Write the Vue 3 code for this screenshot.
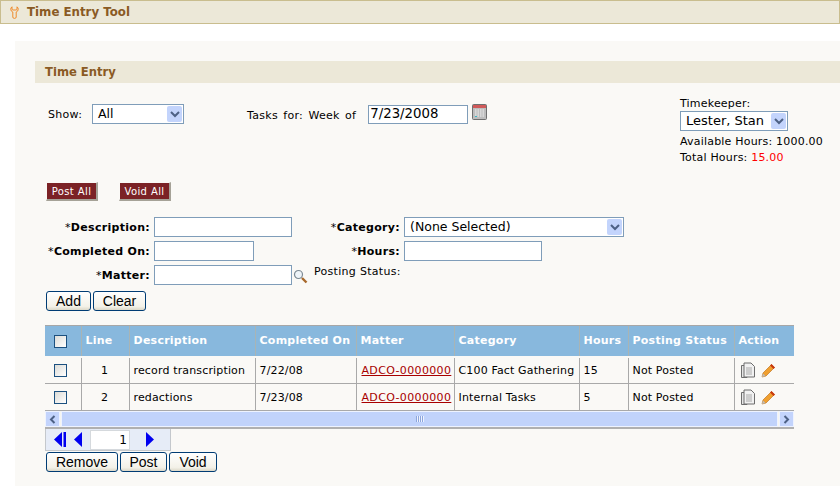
<template>
	<div class="page">
		<div class="tool-bar">
			<svg class="tool-bar__icon" width="9" height="13" viewBox="0 0 9 13" fill="none" stroke="#ef8a2c" stroke-width="1">
				<path d="M2 0.8 V3 Q2 4 3 4 H6 Q7 4 7 3 V0.8 Q8.5 1.8 8.2 3.6 Q8 5.4 6.2 6 V11 Q6.2 12.4 4.5 12.4 Q2.8 12.4 2.8 11 V6 Q1 5.4 0.8 3.6 Q0.5 1.8 2 0.8 Z" />
			</svg>
			<span>Time Entry Tool</span>
		</div>

		<div class="panel">
			<div class="section-title">Time Entry</div>

			<div class="top-row">
				<div class="show">
					<span class="show__label">Show:</span>
					<div class="select select--show">
						<span>All</span>
						<span class="select__arrow"><svg width="10" height="7" viewBox="0 0 10 7"><path d="M1 1 L5 5 L9 1" fill="none" stroke="#4d6185" stroke-width="2" /></svg></span>
					</div>
				</div>
				<div class="week">
					<span class="week__label">Tasks for: Week of</span>
					<div class="input input--date">7/23/2008</div>
					<svg class="week__cal" width="16" height="17" viewBox="0 0 16 17">
						<rect x="0.5" y="0.5" width="14" height="15" rx="1" fill="#bdbdbd" stroke="#6f6f6f" />
						<rect x="1" y="1" width="13" height="3" fill="#d05a5a" />
						<path d="M3 6h9M3 8h9M3 10h9M3 12h9" stroke="#f2f2f2" stroke-dasharray="1.5 1" />
						<rect x="3" y="12" width="2" height="1" fill="#39b6c4" />
					</svg>
				</div>
				<div class="keeper">
					<div class="keeper__title">Timekeeper:</div>
					<div class="select select--keeper">
						<span>Lester, Stan</span>
						<span class="select__arrow"><svg width="10" height="7" viewBox="0 0 10 7"><path d="M1 1 L5 5 L9 1" fill="none" stroke="#4d6185" stroke-width="2" /></svg></span>
					</div>
					<div class="keeper__line keeper__line--first">Available Hours: 1000.00</div>
					<div class="keeper__line">Total Hours: <span class="red">15.00</span></div>
				</div>
			</div>

			<div class="bulk">
				<button class="bulk__btn">Post All</button>
				<button class="bulk__btn">Void All</button>
			</div>

			<div class="form">
				<div class="form__col">
					<div class="field">
						<label class="field__label field__label--left">*<b>Description:</b></label>
						<div class="input input--desc"></div>
					</div>
					<div class="field">
						<label class="field__label field__label--left">*<b>Completed On:</b></label>
						<div class="input input--done"></div>
					</div>
					<div class="field">
						<label class="field__label field__label--left">*<b>Matter:</b></label>
						<div class="input input--desc"></div>
						<svg class="field__search" width="15" height="15" viewBox="0 0 15 15">
							<circle cx="5.5" cy="5.5" r="4" fill="#eef4f8" stroke="#7d8a94" stroke-width="1.2" />
							<path d="M9 9 L13.5 13.5" stroke="#a8692c" stroke-width="2.4" />
						</svg>
					</div>
				</div>
				<div class="form__col">
					<div class="field">
						<label class="field__label field__label--right">*<b>Category:</b></label>
						<div class="select select--category">
							<span>(None Selected)</span>
							<span class="select__arrow"><svg width="10" height="7" viewBox="0 0 10 7"><path d="M1 1 L5 5 L9 1" fill="none" stroke="#4d6185" stroke-width="2" /></svg></span>
						</div>
					</div>
					<div class="field">
						<label class="field__label field__label--right">*<b>Hours:</b></label>
						<div class="input input--desc"></div>
					</div>
					<div class="field field--status">Posting Status:</div>
				</div>
			</div>

			<div class="actions">
				<button class="btn btn--add">Add</button>
				<button class="btn btn--clear">Clear</button>
			</div>

			<div class="grid">
				<table class="grid__table">
					<colgroup>
						<col v-for="w in widths" :key="w.name" :style="{ width: w.size + 'px' }" />
					</colgroup>
					<thead>
						<tr>
							<th class="center center--check"><span class="check"></span></th>
							<th>Line</th>
							<th>Description</th>
							<th>Completed On</th>
							<th>Matter</th>
							<th>Category</th>
							<th>Hours</th>
							<th>Posting Status</th>
							<th>Action</th>
						</tr>
					</thead>
					<tbody>
						<tr v-for="row in rows" :key="row.line">
							<td class="center center--check"><span class="check"></span></td>
							<td class="center">{{ row.line }}</td>
							<td>{{ row.description }}</td>
							<td>{{ row.completed }}</td>
							<td><a class="matter">{{ row.matter }}</a></td>
							<td>{{ row.category }}</td>
							<td>{{ row.hours }}</td>
							<td>{{ row.status }}</td>
							<td>
								<div class="row-icons">
									<svg width="16" height="17" viewBox="0 0 16 17">
										<path d="M1.5 3.5 H7 V15.5 H1.5 Z" fill="#e6e6e6" stroke="#6d6d6d" />
										<path d="M4 1 H11 L14.5 4.5 V15 H4 Z" fill="#f1f1f1" stroke="#6d6d6d" />
										<path d="M6 6h6M6 8h6M6 10h6M6 12h6" stroke="#a9a9a9" />
									</svg>
									<svg width="15" height="15" viewBox="0 0 15 15">
										<path d="M1 14 L2 10 L10.5 1.5 L13.5 4.5 L5 13 Z" fill="#f0a030" stroke="#b86a10" stroke-width="0.6" />
										<path d="M1 14 L2 10.5 L4.5 13 Z" fill="#bdbdbd" />
										<path d="M10.5 1 L14 4.5 L12.5 6 L9 2.5 Z" fill="#c8390f" />
									</svg>
								</div>
							</td>
						</tr>
					</tbody>
				</table>
				<div class="scroll">
					<span class="scroll__btn"><svg width="7" height="9" viewBox="0 0 7 9"><path d="M5.5 1 L2 4.5 L5.5 8" fill="none" stroke="#4d6185" stroke-width="2" /></svg></span>
					<div class="scroll__track"><span class="scroll__grip"></span></div>
					<span class="scroll__btn"><svg width="7" height="9" viewBox="0 0 7 9"><path d="M1.5 1 L5 4.5 L1.5 8" fill="none" stroke="#4d6185" stroke-width="2" /></svg></span>
				</div>
			</div>

			<div class="pager">
				<svg width="13" height="15" viewBox="0 0 13 15"><path d="M8 0 V15 L0 7.5 Z M9.5 0 H12 V15 H9.5 Z" fill="#0000f0" /></svg>
				<svg class="pager__prev" width="8" height="15" viewBox="0 0 8 15"><path d="M8 0 V15 L0 7.5 Z" fill="#0000f0" /></svg>
				<div class="pager__input">1</div>
				<svg class="pager__next" width="8" height="15" viewBox="0 0 8 15"><path d="M0 0 V15 L8 7.5 Z" fill="#0000f0" /></svg>
			</div>

			<div class="actions actions--bottom">
				<button class="btn btn--remove">Remove</button>
				<button class="btn btn--post">Post</button>
				<button class="btn btn--void">Void</button>
			</div>
		</div>
	</div>
</template>

<script setup>
const widths = [
	{ name: "check", size: 36 },
	{ name: "line", size: 48 },
	{ name: "description", size: 126 },
	{ name: "completed", size: 101 },
	{ name: "matter", size: 98 },
	{ name: "category", size: 125 },
	{ name: "hours", size: 49 },
	{ name: "status", size: 106 },
	{ name: "action", size: 60 },
];

const rows = [
	{
		line: 1,
		description: "record transcription",
		completed: "7/22/08",
		matter: "ADCO-0000000",
		category: "C100 Fact Gathering",
		hours: 15,
		status: "Not Posted",
	},
	{
		line: 2,
		description: "redactions",
		completed: "7/23/08",
		matter: "ADCO-0000000",
		category: "Internal Tasks",
		hours: 5,
		status: "Not Posted",
	},
];
</script>

<style>
html,
body {
	margin: 0;
	background: #ffffff;
}
</style>

<style scoped>
.page {
	width: 840px;
	height: 486px;
	overflow: hidden;
	font-family: "DejaVu Sans", Verdana, sans-serif;
	font-size: 11px;
	color: #000;
	background: #fff;
}

.tool-bar {
	box-sizing: border-box;
	height: 24px;
	display: flex;
	align-items: center;
	gap: 8px;
	padding-left: 9px;
	background: #ece8d8;
	border: 1px solid #c9bd8e;
	font-size: 11.8px;
	font-weight: bold;
	color: #8a5a24;
}

.panel {
	box-sizing: border-box;
	margin: 17px 0 0 15px;
	height: 445px;
	padding: 20px 0 0 20px;
	background: #faf9f6;
}

.section-title {
	box-sizing: border-box;
	height: 22px;
	padding-left: 10px;
	line-height: 22px;
	background: #ece8d8;
	font-size: 11.6px;
	font-weight: bold;
	color: #8a5a24;
}

.top-row {
	display: flex;
	height: 99px;
	padding: 21px 0 0 13px;
	box-sizing: border-box;
}

.show {
	display: flex;
	align-items: flex-start;
	width: 199px;
	line-height: 22px;
}

.show__label {
	width: 44px;
	letter-spacing: 0.3px;
}

.week {
	display: flex;
	align-items: flex-start;
	line-height: 24px;
	width: 433px;
}

.week__label {
	letter-spacing: 0.3px;
	word-spacing: 1.5px;
}

.week__cal {
	margin-left: 4px;
}

.keeper {
	margin-top: -7px;
	letter-spacing: 0.2px;
}

.keeper__title {
	line-height: 14px;
}

.keeper__line {
	height: 16px;
	line-height: 16px;
}

.keeper__line--first {
	margin-top: 3px;
}

.red {
	color: #f00;
}

.select,
.input {
	box-sizing: border-box;
	height: 20px;
	background: #fff;
	border: 1px solid #7f9db9;
	font-size: 12.5px;
	line-height: 18px;
	letter-spacing: 0;
}

.select {
	display: flex;
	align-items: center;
	justify-content: space-between;
	padding: 0 1px 0 5px;
}

.select__arrow {
	width: 15px;
	height: 16px;
	display: flex;
	align-items: center;
	justify-content: center;
	background: #c3d4fc;
	border-radius: 2px;
}

.select--show {
	width: 92px;
}

.select--keeper {
	width: 108px;
	font-size: 13px;
}

.select--category {
	width: 220px;
}

.input--date {
	width: 100px;
	height: 19px;
	margin: 1px 0 0 12px;
	padding-left: 1px;
	font-size: 13.3px;
	line-height: 16px;
}

.input--desc {
	width: 138px;
}

.input--done {
	width: 100px;
}

.bulk {
	display: flex;
	gap: 21px;
	padding-left: 11px;
}

.bulk__btn {
	box-sizing: border-box;
	width: 52px;
	height: 19px;
	padding: 0;
	border: 1px solid #faf9f6;
	border-right: 2px solid #a5a297;
	border-bottom: 2px solid #a5a297;
	background: #7b2226;
	color: #fff;
	font-family: inherit;
	font-size: 10px;
	letter-spacing: 0.4px;
}

.form {
	display: flex;
	margin-top: 16px;
}

.form__col {
	display: flex;
	flex-direction: column;
	gap: 4px;
}

.form__col:first-child {
	width: 279px;
}

.field {
	display: flex;
	align-items: center;
	height: 20px;
}

.field__label {
	display: block;
	text-align: right;
	padding-right: 4px;
	box-sizing: border-box;
	letter-spacing: 0.3px;
	white-space: nowrap;
}

.field__label--left {
	width: 119px;
}

.field__label--right {
	width: 90px;
}

.field__search {
	margin: 3px 0 0 1px;
}

.field--status {
	align-items: flex-start;
	line-height: 14px;
	letter-spacing: 0.3px;
}

.actions {
	display: flex;
	gap: 2px;
	padding-left: 11px;
	margin-top: 6px;
}

.actions--bottom {
	margin-top: 1px;
}

.btn {
	box-sizing: border-box;
	height: 20px;
	padding: 0;
	border: 1px solid #003c74;
	border-radius: 3px;
	background: linear-gradient(#ffffff, #f3f1e8 80%, #dcd8c8);
	font-family: "Liberation Sans", Arial, sans-serif;
	font-size: 14px;
	color: #000;
}

.btn--add {
	width: 45px;
}

.btn--clear {
	width: 53px;
}

.btn--remove {
	width: 72px;
}

.btn--post {
	width: 47px;
}

.btn--void {
	width: 48px;
}

.grid {
	width: 749px;
	margin: 14px 0 0 10px;
	background: #fff;
}

.grid__table {
	width: 749px;
	table-layout: fixed;
	border-collapse: collapse;
	background: #faf9f6;
}

.grid__table th {
	height: 31px;
	padding: 0 0 0 4px;
	text-align: left;
	background: #88b8dd;
	background-clip: padding-box;
	color: #fff;
	font-size: 11px;
	letter-spacing: 0.25px;
	border-left: 1px solid #a9b4b4;
	border-top: 1px solid #a7a7a7;
	border-bottom: 2px solid #faf9f6;
	box-sizing: border-box;
	white-space: nowrap;
}

.grid__table th:first-child {
	border-left: none;
}

.grid__table td {
	box-sizing: border-box;
	height: 27px;
	padding: 0 0 0 4px;
	border-left: 1px solid #a9a9a9;
	border-bottom: 1px solid #a9a9a9;
	white-space: nowrap;
	overflow: hidden;
	letter-spacing: 0.15px;
}

.grid__table td:first-child {
	border-left: none;
}

.grid__table .center {
	padding-left: 0;
	padding-right: 1px;
	text-align: center;
}

.grid__table .center--check {
	padding-right: 5px;
}

.check {
	display: inline-block;
	box-sizing: border-box;
	width: 13px;
	height: 13px;
	vertical-align: middle;
	border: 1px solid #1c5180;
	background: linear-gradient(135deg, #dcdcd7, #ffffff);
}

.matter {
	margin-left: 1px;
	color: #a80000;
	text-decoration: underline;
	letter-spacing: 0.35px;
}

.row-icons {
	display: flex;
	align-items: center;
	gap: 5px;
	padding-left: 1px;
}

.scroll {
	display: flex;
	height: 18px;
	background: #f5f5f0;
	border-bottom: 2px solid #b0b0b0;
	box-sizing: border-box;
}

.scroll__btn {
	width: 15px;
	display: flex;
	align-items: center;
	justify-content: center;
	background: #c3d4fc;
	border: 1px solid #eef3ff;
	box-sizing: border-box;
}

.scroll__track {
	flex: 1;
	display: flex;
	align-items: center;
	justify-content: center;
	margin: 0 1px;
	background: #c1d3fb;
	border: 1px solid #eef3ff;
	box-sizing: border-box;
}

.scroll__grip {
	width: 8px;
	height: 6px;
	background: repeating-linear-gradient(90deg, #8da6dc 0 1px, #eef3ff 1px 2px);
}

.pager {
	box-sizing: border-box;
	display: flex;
	align-items: center;
	width: 126px;
	height: 22px;
	margin-left: 10px;
	padding-left: 8px;
	background: #e6ecf7;
	border: 1px solid #c4c8cc;
	border-top: none;
}

.pager__prev {
	margin-left: 7px;
}

.pager__input {
	box-sizing: border-box;
	width: 40px;
	height: 20px;
	margin-left: 8px;
	padding-right: 2px;
	text-align: right;
	background: #fff;
	border: 1px solid #d5d9dd;
	font-size: 12px;
	line-height: 18px;
}

.pager__next {
	margin-left: 16px;
}
</style>
